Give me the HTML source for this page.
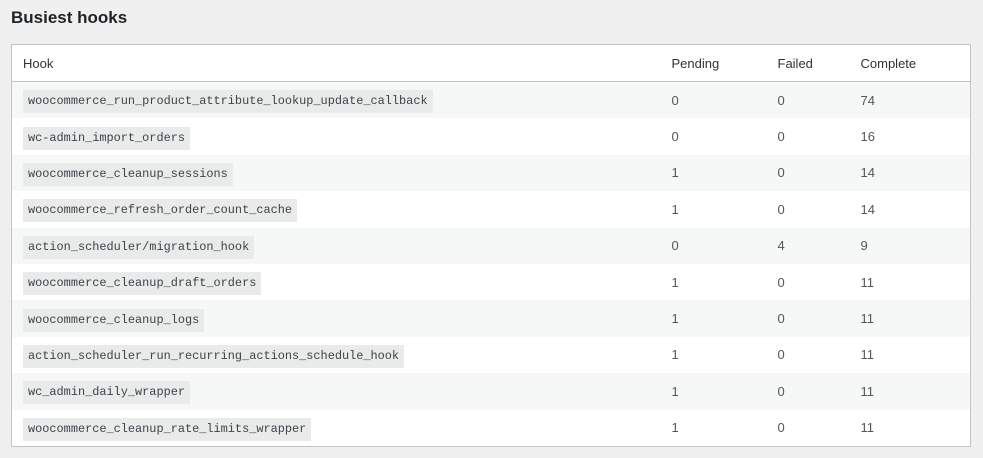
<!DOCTYPE html>
<html><head><meta charset="utf-8"><style>
body{margin:0;background:#f0f0f1;font-family:"Liberation Sans",sans-serif;color:#3c434a;width:983px;height:458px;overflow:hidden}
h2{position:absolute;left:11px;top:8px;margin:0;font-size:17px;font-weight:bold;color:#1d2327}
table{position:absolute;left:11px;top:44px;width:960px;border:1px solid #c3c4c7;border-collapse:collapse;background:#fff;font-size:13px}
th{text-align:left;font-weight:normal;height:36px;border-bottom:1px solid #c3c4c7;color:#2c3338;padding:0 0 0 12px}
th:first-child,td:first-child{padding-left:11px}
td{height:36.4px;padding:0 0 0 12px;color:#50575e}
tbody tr:nth-child(odd){background:#f6f7f7}
code{font-family:"Liberation Mono",monospace;font-size:11.9px;background:#e9eaea;padding:4px 5px 5px;color:#3c434a}
</style></head><body>
<h2>Busiest hooks</h2>
<table>
<colgroup><col style="width:648px"><col style="width:106px"><col style="width:83px"><col></colgroup>
<thead><tr><th>Hook</th><th>Pending</th><th>Failed</th><th>Complete</th></tr></thead>
<tbody>
<tr><td><code>woocommerce_run_product_attribute_lookup_update_callback</code></td><td>0</td><td>0</td><td>74</td></tr>
<tr><td><code>wc-admin_import_orders</code></td><td>0</td><td>0</td><td>16</td></tr>
<tr><td><code>woocommerce_cleanup_sessions</code></td><td>1</td><td>0</td><td>14</td></tr>
<tr><td><code>woocommerce_refresh_order_count_cache</code></td><td>1</td><td>0</td><td>14</td></tr>
<tr><td><code>action_scheduler/migration_hook</code></td><td>0</td><td>4</td><td>9</td></tr>
<tr><td><code>woocommerce_cleanup_draft_orders</code></td><td>1</td><td>0</td><td>11</td></tr>
<tr><td><code>woocommerce_cleanup_logs</code></td><td>1</td><td>0</td><td>11</td></tr>
<tr><td><code>action_scheduler_run_recurring_actions_schedule_hook</code></td><td>1</td><td>0</td><td>11</td></tr>
<tr><td><code>wc_admin_daily_wrapper</code></td><td>1</td><td>0</td><td>11</td></tr>
<tr><td><code>woocommerce_cleanup_rate_limits_wrapper</code></td><td>1</td><td>0</td><td>11</td></tr>
</tbody></table>
</body></html>
